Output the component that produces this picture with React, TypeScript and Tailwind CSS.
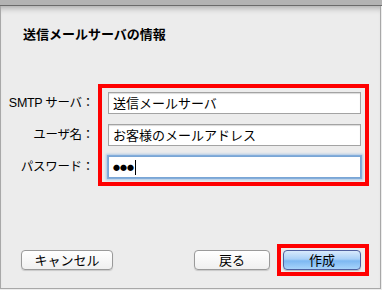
import React from "react";

const font = { fontFamily: '"Noto Sans CJK JP", "Liberation Sans", sans-serif' };
const labelFont = { fontFamily: '"Liberation Sans", "Noto Sans CJK JP", sans-serif' };

export default function App() {
  return (
    <div
      className="w-[382px] h-[290px] bg-[#ececec] flex flex-col overflow-hidden text-black"
      style={font}
    >
      <div className="h-[6px] bg-[#b3b3b3] border-b border-[#6b6b6b] shrink-0" />
      <div className="flex-1 flex flex-col border-l border-r border-b border-[#a8a8a8] mr-[1px] mb-[1px] shadow-[inset_0_7px_6px_-5px_rgba(0,0,0,0.3)]">
        <div className="pl-[22px] pt-[20px] text-[13px] leading-[16px] font-bold">
          送信メールサーバの情報
        </div>
        <div className="flex mt-[42px]">
          <div
            className="w-[97px] flex flex-col pt-[8px] gap-[10px] text-[12.5px] tracking-[-0.3px]"
            style={labelFont}
          >
            <div className="h-[22px] flex items-center justify-end pr-[4px]">SMTP サーバ：</div>
            <div className="h-[22px] flex items-center justify-end pr-[4px]">ユーザ名：</div>
            <div className="h-[22px] flex items-center justify-end pr-[4px]">パスワード：</div>
          </div>
          <div className="w-[271px] h-[102px] border-4 border-[#ff0000] pl-[6px] pt-[4px] flex flex-col gap-[10px]">
            <div className="w-[253px] h-[22px] bg-white border border-[#a3a3a3] shadow-[inset_0_1px_1px_rgba(0,0,0,0.15)] flex items-center pl-[4px] text-[13px]">
              送信メールサーバ
            </div>
            <div className="w-[253px] h-[22px] bg-white border border-[#a3a3a3] shadow-[inset_0_1px_1px_rgba(0,0,0,0.15)] flex items-center pl-[4px] text-[13px]">
              お客様のメールアドレス
            </div>
            <div className="w-[253px] h-[22px] bg-white border border-[#7aa6d6] shadow-[0_0_0_1px_rgba(120,165,215,0.8),0_0_2px_2px_rgba(130,175,225,0.6)] flex items-center pl-[4px] text-[13px]">
              <span className="text-[7px] leading-none tracking-[0px] pt-[1px]">●●●</span>
              <span className="w-[1px] h-[15px] bg-black ml-[1px]" />
            </div>
          </div>
        </div>
        <div className="flex-1" />
        <div className="flex items-center pl-[20px] pr-[11px] mb-[12px] text-[13px]">
          <div className="w-[92px] h-[20px] rounded-[4px] border border-[#9a9a9a] bg-gradient-to-b from-white to-[#f0f0f0] shadow-[0_1px_1px_rgba(0,0,0,0.15)] flex items-center justify-center">
            キャンセル
          </div>
          <div className="flex-1" />
          <div className="w-[76px] h-[20px] rounded-[4px] border border-[#9a9a9a] bg-gradient-to-b from-white to-[#f0f0f0] shadow-[0_1px_1px_rgba(0,0,0,0.15)] flex items-center justify-center">
            戻る
          </div>
          <div className="ml-[7px] w-[92px] h-[32px] border-4 border-[#ff0000] pl-[2px] flex items-center">
            <div className="w-[78px] h-[20px] rounded-[4px] border border-[#4f5f9e] bg-[linear-gradient(to_bottom,#d8eafc_0%,#a9d0f7_45%,#7db8f2_55%,#a8d4fb_100%)] shadow-[0_1px_1px_rgba(0,0,0,0.2)] flex items-center justify-center">
              作成
            </div>
          </div>
        </div>
      </div>
    </div>
  );
}
